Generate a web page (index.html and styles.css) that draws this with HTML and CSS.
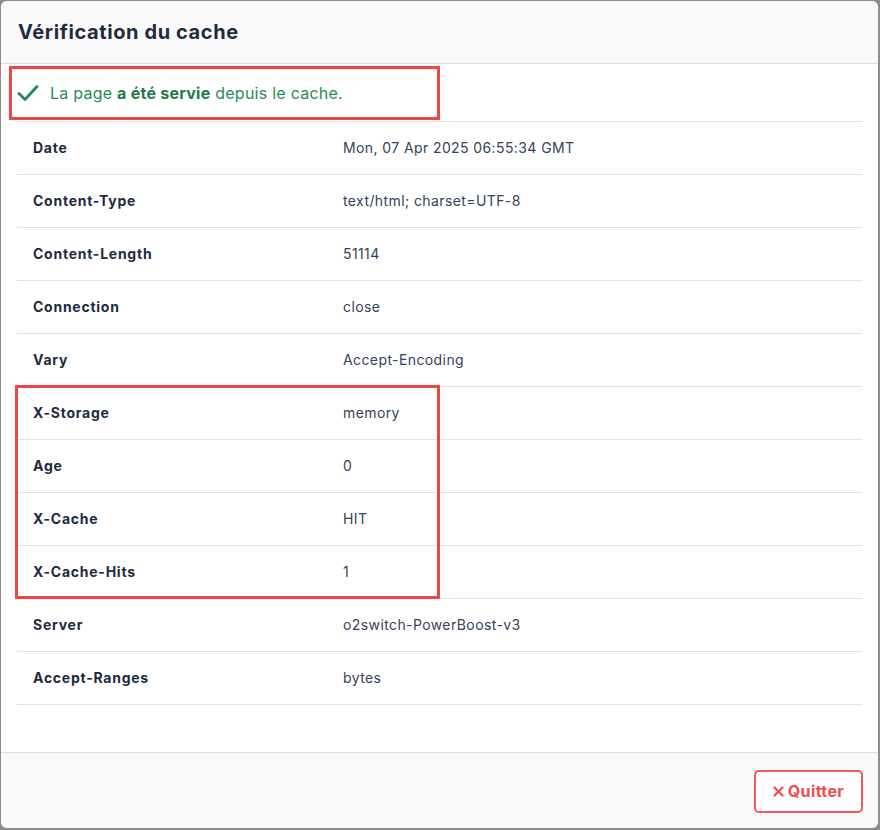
FILE: index.html
```html
<!DOCTYPE html>
<html lang="fr">
<head>
<meta charset="utf-8">
<title>Vérification du cache</title>
<link rel="stylesheet" href="styles.css">
</head>
<body>
<div class="modal">
  <div class="modal-header">
    <h1 class="modal-title">Vérification du cache</h1>
  </div>
  <div class="modal-body">
    <div class="alert">
      <svg class="check" width="22" height="18" viewBox="0 0 22 18"><path d="M2 9.5 L8 15.5 L20 2.5" fill="none" stroke="#1f8a55" stroke-width="2.8" stroke-linecap="round" stroke-linejoin="round"/></svg>
      <span>La page <strong>a été servie</strong> depuis le cache.</span>
    </div>
    <div class="table">
      <div class="row"><div class="key">Date</div><div class="val">Mon, 07 Apr 2025 06:55:34 GMT</div></div>
      <div class="row"><div class="key">Content-Type</div><div class="val">text/html; charset=UTF-8</div></div>
      <div class="row"><div class="key">Content-Length</div><div class="val">51114</div></div>
      <div class="row"><div class="key">Connection</div><div class="val">close</div></div>
      <div class="row"><div class="key">Vary</div><div class="val">Accept-Encoding</div></div>
      <div class="row"><div class="key">X-Storage</div><div class="val">memory</div></div>
      <div class="row"><div class="key">Age</div><div class="val">0</div></div>
      <div class="row"><div class="key">X-Cache</div><div class="val">HIT</div></div>
      <div class="row"><div class="key">X-Cache-Hits</div><div class="val">1</div></div>
      <div class="row"><div class="key">Server</div><div class="val">o2switch-PowerBoost-v3</div></div>
      <div class="row"><div class="key">Accept-Ranges</div><div class="val">bytes</div></div>
    </div>
    <div class="mark mark-alert"></div>
    <div class="mark mark-rows"></div>
  </div>
  <div class="modal-footer">
    <button class="btn-quit"><svg class="x" width="11" height="11" viewBox="0 0 11 11"><path d="M1.5 1.5 L9.5 9.5 M9.5 1.5 L1.5 9.5" stroke="#f04e4e" stroke-width="2.2" stroke-linecap="round"/></svg>Quitter</button>
  </div>
</div>
</body>
</html>
```
FILE: styles.css
```css
html, body {
  margin: 0;
  padding: 0;
  height: 100%;
}
body {
  background: #8c8c8c;
  font-family: Inter, "Noto Sans", sans-serif;
  padding: 1px 2px 2px 1px;
  box-sizing: border-box;
  height: 830px;
  overflow: hidden;
}
.modal {
  background: #fff;
  height: 827px;
  border-radius: 6px;
  display: flex;
  flex-direction: column;
  overflow: hidden;
}
.modal-header {
  height: 62px;
  background: #f9f9f9;
  border-bottom: 1px solid #dedede;
  display: flex;
  align-items: center;
  padding-left: 17px;
  flex-shrink: 0;
}
.modal-title {
  margin: 0;
  font-size: 20px;
  font-weight: 700;
  color: #1f2c3f;
  letter-spacing: 0.6px;
  margin-top: -1px;
}
.modal-body {
  flex: 1;
  position: relative;
  padding: 0 16px 0 16px;
}
.alert {
  height: 57px;
  display: flex;
  align-items: center;
  color: #2a8a57;
  font-size: 16px;
  letter-spacing: 0.25px;
}
.alert strong {
  font-weight: 700;
  color: #1f7a49;
}
.check {
  margin-right: 11px;
  margin-top: 1px;
}
.table {
  border-bottom: 1px solid #e2e2e2;
}
.row {
  display: grid;
  grid-template-columns: 310px 1fr;
  height: 52px;
  align-items: center;
  padding-left: 16px;
  border-top: 1px solid #e2e2e2;
  font-size: 14px;
}
.key {
  font-weight: 700;
  color: #1e2b3e;
  letter-spacing: 0.75px;
  margin-top: -1px;
}
.val {
  color: #354259;
  letter-spacing: 0.4px;
  margin-top: -1px;
}
.mark {
  position: absolute;
  border: 3px solid #f04545;
  pointer-events: none;
}
.mark-alert {
  left: 8px;
  top: 2px;
  width: 425px;
  height: 48px;
}
.mark-rows {
  left: 14px;
  top: 321px;
  width: 419px;
  height: 208px;
}
.modal-footer {
  height: 75px;
  background: #f9f9f9;
  border-top: 1px solid #dedede;
  display: flex;
  justify-content: flex-end;
  align-items: center;
  padding-right: 15px;
  flex-shrink: 0;
}
.btn-quit {
  width: 109px;
  height: 43px;
  background: #fff;
  border: 2px solid #f25a5a;
  border-radius: 5px;
  color: #f04e4e;
  font-family: Inter, "Noto Sans", sans-serif;
  font-size: 16px;
  font-weight: 700;
  letter-spacing: 0.4px;
  margin-top: 1px;
  padding: 0;
  display: flex;
  align-items: center;
  justify-content: center;
  gap: 4px;
}
.btn-quit .x {
  margin-top: 1px;
}
```
